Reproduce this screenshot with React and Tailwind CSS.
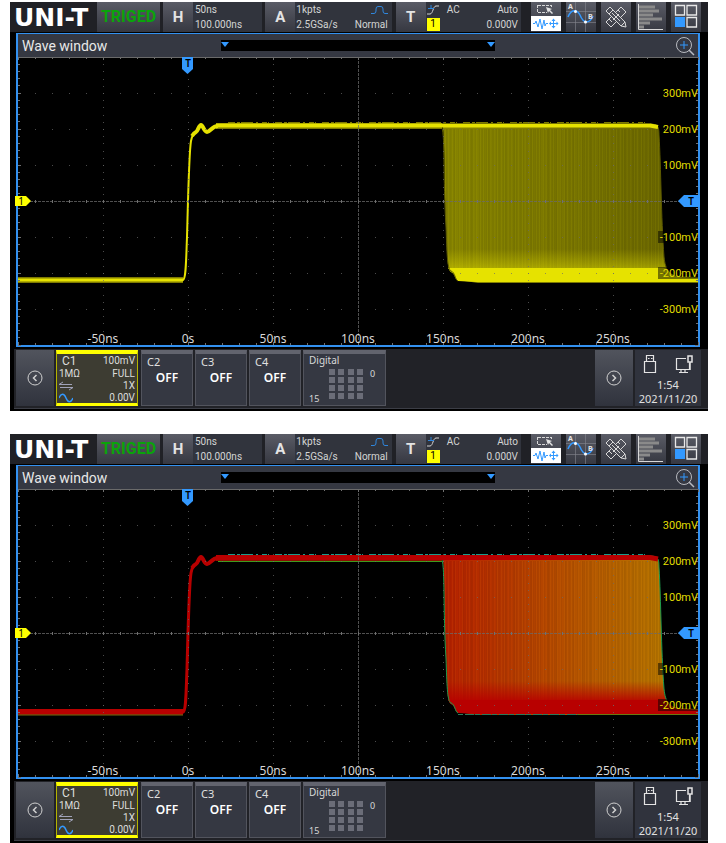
import React from 'react';

const DIV_X = 85;
const DIV_Y = 36;
const W = 680;
const H = 288;

const RISE =
  'M0 223 H165 C168 222 168 205 169 180 C170 145 171 95 173 84 C174 78 176 76 178 75 C180 74 181 68 183 68 C185 68 186 75 189 75 C192 75 194 69 200 69';
const RIPPLE =
  'M174 79 C176 76 176 76 178 75 C180 74 181 68 183 68 C185 68 186 75 189 75 C192 75 194 69 200 69';
const ZONE =
  'M424 67 C427 72 426 120 428 170 C429 195 429 214 433 215 C437 216 437 223 440 223 L460 226 H680 V220 L660 219 C650 217 647 212 646 200 C643 160 643 110 641 78 C641 70 640 67 635 67 Z';
const LEFT_EDGE = 'M424 71 C427 80 425 120 428 170 C429 195 429 212 433 214 C437 215 437 223 440 224';
const RIGHT_EDGE = 'M632 67 C640 67 641 70 641 78 C643 110 643 160 646 200 C647 208 648 210 649 211';
const BAND = 'M430 211 L433 215 C437 216 437 223 440 224 L458 225 H680 V221 L660 220 C652 218 650 212 646 211 Z';

const themes = {
  yellow: {
    id: 'yellow',
    core: '#e6e200',
    dim: '#7d7900',
    stops: ['#8a8700', '#7f7b00', '#6d6900'],
    streak: '#a8a400',
    edge: '#5c5900',
  },
  red: {
    id: 'red',
    core: '#b80000',
    dim: '#8a1000',
    stops: ['#b82000', '#b84800', '#b87a00'],
    streak: '#c88a10',
    edge: '#1d9a4c',
  },
};

function times(n) {
  return Array.from({ length: n }, (_, i) => i);
}

function Grid() {
  return (
    <g stroke="#6b6b6b" strokeWidth="1" shapeRendering="crispEdges">
      {times(7).map((i) => (
        <line
          key={'v' + i}
          x1={(i + 1) * DIV_X}
          x2={(i + 1) * DIV_X}
          y1="0"
          y2={H}
          strokeDasharray={i === 3 ? '3 1' : '1 6.2'}
          opacity={i === 3 ? 0.75 : 0.7}
        />
      ))}
      {times(7).map((i) => (
        <line
          key={'h' + i}
          x1="0"
          x2={W}
          y1={(i + 1) * DIV_Y}
          y2={(i + 1) * DIV_Y}
          strokeDasharray={i === 3 ? '3 1' : '1 16'}
          opacity={i === 3 ? 0.75 : 0.7}
        />
      ))}
      {times(41).map((i) => {
        const len = i % 5 === 0 ? 3 : 2;
        return (
          <g key={'t' + i} stroke="#707070">
            <path d={`M${i * 17} 0 v${len} M${i * 17} ${H} v-${len} M${i * 17} 143 v3`} />
            <path d={`M0 ${i * 7.2} h${len} M${W} ${i * 7.2} h-${len}`} />
          </g>
        );
      })}
      <line x1="0" x2={W} y1="0.5" y2="0.5" stroke="#6a6a6a" />
    </g>
  );
}

function Trace({ theme }) {
  const fill = 'fill-' + theme.id;
  const fade = 'fade-' + theme.id;
  const clip = 'clip-' + theme.id;
  const red = theme.id === 'red';
  return (
    <g fill="none">
      <defs>
        <linearGradient id={fill}>
          <stop offset="0" stopColor={theme.stops[0]} />
          <stop offset="0.4" stopColor={theme.stops[1]} />
          <stop offset="0.9" stopColor={theme.stops[2]} />
        </linearGradient>
        <linearGradient id={fade} x1="0" x2="0" y1="0" y2="1">
          <stop offset="0" stopColor={theme.core} stopOpacity="0" />
          <stop offset="1" stopColor={theme.core} stopOpacity={red ? 0.9 : 0.45} />
        </linearGradient>
        <clipPath id={clip}>
          <path d={ZONE} />
        </clipPath>
      </defs>
      <path d={ZONE} fill={`url(#${fill})`} />
      <g clipPath={`url(#${clip})`}>
        {times(222).map((i) => (
          <line
            key={i}
            x1={425.5 + i}
            x2={425.5 + i}
            y1="72"
            y2="212"
            stroke={(i * i) % 7 < 3 ? '#000000' : theme.streak}
            opacity={0.02 + ((i * i * 13 + i * 5) % 17) / 200}
          />
        ))}
        <rect x="424" y="192" width="230" height="20" fill={`url(#${fade})`} />
      </g>
      <path d={BAND} fill={theme.core} />
      <path d={LEFT_EDGE} stroke={theme.edge} />
      <path d={RIGHT_EDGE} stroke={theme.edge} />
      <path d="M0 223 H165" stroke={theme.dim} strokeWidth="6" />
      <path d="M198 69 H424" stroke={theme.dim} strokeWidth="6" />
      <path d={RISE} stroke={theme.core} strokeWidth={red ? 3 : 2} strokeLinejoin="round" />
      <path d={RIPPLE} stroke={theme.core} strokeWidth="4" />
      <path d="M198 68.5 H632 L640 70" stroke={theme.core} strokeWidth={red ? 5 : 4} />
      <path
        d="M210 65.5 H630"
        stroke={red ? '#1d9a8c' : '#7d7900'}
        strokeDasharray="7 2 3 1 12 3 2 4 5 1 1 6"
      />
      {red ? (
        <g>
          <path d="M0 222.500 H165" stroke={theme.core} strokeWidth="5" />
          <path d="M200 72.500 H424" stroke="#3f9a1c" />
          <path d="M0 226 H165" stroke="#7a6a10" />
          <path d="M440 225.500 H560" stroke="#2b7a5a" strokeDasharray="5 2 9 1" />
          <path d="M560 225.500 H680" stroke="#6a7a10" />
        </g>
      ) : (
        <path d="M0 223 H165" stroke={theme.core} strokeWidth="3" />
      )}
    </g>
  );
}

const volts = ['300mV', '200mV', '100mV', null, '-100mV', '-200mV', '-300mV'];
const nanos = ['-50ns', '0s', '50ns', '100ns', '150ns', '200ns', '250ns'];

function Plot({ theme }) {
  return (
    <svg viewBox={`0 0 ${W} ${H}`} className="block w-full overflow-visible bg-black" role="img" aria-label="Channel 1 waveform">
      <Trace theme={theme} />
      <Grid />
      {volts.map((v, i) =>
        v ? (
          <g key={v}>
            {i > 3 && <rect x="640" y={(i + 1) * DIV_Y - 6} width="40" height="12" fill="#000000" opacity="0.5" />}
            <text x="680" y={(i + 1) * DIV_Y + 4} textAnchor="end" fill="#e0dc00" className="font-['Roboto',sans-serif] text-[11px]">
              {v}
            </text>
          </g>
        ) : null
      )}
      {nanos.map((n, i) => (
        <text key={n} x={(i + 1) * DIV_X} y="286" textAnchor="middle" fill="#d8d8d8" className="text-[12px]">
          {n}
        </text>
      ))}
      <path d="M164 0 H175 V12 L169.500 17 L164 12 Z" fill="#3399ff" />
      <text x="170" y="10" textAnchor="middle" fill="#000000" className="text-[10px] font-semibold">T</text>
      <path d="M-3 139 H8 L13 144 L8 149 H-3 Z" fill="#ffff00" />
      <text x="3" y="148" textAnchor="middle" fill="#000000" className="text-[10px]">1</text>
      <path d="M682 138 H666 L660 144 L666 150 H682 Z" fill="#3399ff" />
      <text x="673" y="148" textAnchor="middle" fill="#000000" className="text-[10px] font-semibold">T</text>
    </svg>
  );
}

function KeyButton({ children }) {
  return (
    <button type="button" className="w-[30px] shrink-0 bg-linear-to-b from-[#5a5c66] to-[#363841] font-['Roboto',sans-serif] text-[15px] font-bold text-[#e4e4e4]">
      {children}
    </button>
  );
}

function ToolButton({ label, children }) {
  return (
    <button type="button" aria-label={label} className="size-[30px] shrink-0 bg-linear-to-b from-[#5a5c66] to-[#363841]">
      <svg viewBox="0 0 30 30" className="size-[30px]" fill="none">
        {children}
      </svg>
    </button>
  );
}

function Cells({ className, children }) {
  return (
    <div className={`grid min-w-0 grow grid-rows-2 items-center bg-[#31343d] font-['Roboto',sans-serif] text-[10px] leading-[14px] text-[#d4d4d4] ${className}`}>
      {children}
    </div>
  );
}

function TopBar() {
  return (
    <div className="flex h-[30px] bg-[#202126] pr-[7px] pl-1">
      <div className="flex w-[83px] shrink-0 items-center font-['DejaVu_Sans',sans-serif] text-[25px] leading-none font-bold text-white">
        UNI-T
      </div>
      <button type="button" className="mr-[3px] w-[63px] shrink-0 bg-linear-to-b from-[#5a5c66] to-[#363841] font-['Roboto',sans-serif] text-[16px] font-bold text-[#0aa30a]">
        TRIGED
      </button>
      <KeyButton>H</KeyButton>
      <Cells className="mr-[3px] basis-[69px] pl-[2px]">
        <div>50ns</div>
        <div>100.000ns</div>
      </Cells>
      <KeyButton>A</KeyButton>
      <Cells className="mr-[4px] basis-[96px] pr-1 pl-px">
        <div className="flex items-center justify-between">
          1kpts
          <svg viewBox="0 0 17 10" className="h-[10px] w-[17px]" fill="none" stroke="#2f86dd">
            <path d="M0 8.500 H3 Q5 8.500 5 6 V4 Q5 1.500 7 1.500 H10 Q12 1.500 12 4 V6 Q12 8.500 14 8.500 H17" />
          </svg>
        </div>
        <div className="flex justify-between">
          <span>2.5GSa/s</span>
          <span>Normal</span>
        </div>
      </Cells>
      <KeyButton>T</KeyButton>
      <Cells className="mr-[10px] basis-[95px] pr-[3px] pl-px">
        <div className="flex items-center">
          <svg viewBox="0 0 12 10" className="mr-2 h-[10px] w-[12px]" fill="none">
            <path d="M0 9 H3 C6 9 6 1 9 1 H12" stroke="#d4d4d4" />
            <path d="M1 3.500 H7 M4 0 V4" stroke="#2f86dd" />
          </svg>
          <span>AC</span>
          <span className="ml-auto">Auto</span>
        </div>
        <div className="flex justify-between">
          <span className="flex h-[13px] w-[13px] items-center justify-center bg-[#ffff00] text-black">1</span>
          <span>0.000V</span>
        </div>
      </Cells>
      <div className="flex shrink-0 gap-[5px]">
        <ToolButton label="Select region">
          <rect y="14" width="30" height="15" fill="#ffffff" />
          <path d="M7 3.500 H20 M7 10.500 H16 M6.500 3 V11 M20.500 3 V5" stroke="#d8d8d8" strokeDasharray="3 1" />
          <path d="M15 5 L21 7 L19 8 L22 11 L21 12 L18 9 L17 11 Z" fill="#e4e4e4" />
          <path d="M2 21.500 H4 L5 19 L7 25 L9 17 L11 27 L13 18 L14 24 L15 21.500 H17 M19 21.500 H27 M22.500 18 V25" stroke="#3399ff" />
          <path d="M18 21.500 L20 19.500 V23.500 Z M27.500 21.500 L25.500 19.500 V23.500 Z M22.500 16.500 L20.500 19 H24.500 Z M22.500 26.500 L20.500 24 H24.500 Z" fill="#3399ff" />
        </ToolButton>
        <ToolButton label="Cursors">
          <path d="M9.500 0 V30 M19.500 0 V30 M0 9.500 H30 M0 20.500 H30" stroke="#85878f" opacity="0.6" />
          <path d="M2 15 C5 7 11 7 14 13 C18 23 24 21 27 14" stroke="#3399ff" strokeWidth="1.500" />
          <circle cx="9.500" cy="9.500" r="1.500" fill="#ffffff" />
          <circle cx="19.500" cy="20" r="1.500" fill="#ffffff" />
          <text x="2" y="7" fill="#e4e4e4" className="text-[7px] font-bold">A</text>
          <text x="22" y="17" fill="#e4e4e4" className="text-[7px] font-bold">B</text>
        </ToolButton>
        <ToolButton label="Measure">
          <g stroke="#d8d8d8">
            <path d="M20 5 L25 10 L10 25 L5 20 Z" />
            <path d="M17 8 L19 10 M14 11 L17 14 M11 14 L13 16 M8 17 L11 20" />
            <path d="M5 9 L9 5 L24 20 L25 25 L20 24 Z" fill="#4a4c55" />
            <path d="M8 12 L12 8 M20 24 L24 20 M11 11 L19 19 M12 18 L18 12" />
          </g>
        </ToolButton>
        <ToolButton label="Histogram">
          <path d="M2.500 2 V27.500 H27" stroke="#d8d8d8" />
          <path d="M3 5 H19 M3 9 H23 M3 13 H17 M3 17 H26 M3 21 H14 M3 25 H8" stroke="#8a8a8a" strokeWidth="3" />
        </ToolButton>
        <ToolButton label="Layout">
          <path d="M4.500 3.500 H13.500 V13 H4.500 Z M16 3.500 H25.500 V13 H16 Z M16 15.500 H25.500 V25 H16 Z" stroke="#e8e8e8" strokeWidth="1.300" />
          <rect x="4" y="15" width="10" height="10" fill="#3399ff" />
        </ToolButton>
      </div>
    </div>
  );
}

function Channel({ name }) {
  return (
    <button type="button" className="flex w-[52px] shrink-0 flex-col border border-t-4 border-[#52545d] border-t-[#62646e] bg-[#353842] pl-[5px] text-left text-[#e0e0e0]">
      <span className="text-[11px] leading-[16px]">{name}</span>
      <span className="w-full pr-[5px] text-center text-[12px] leading-[16px] font-semibold text-white">OFF</span>
    </button>
  );
}

function ArrowButton({ label, d, className }) {
  return (
    <button type="button" aria-label={label} className={`flex w-[38px] shrink-0 items-center justify-center bg-linear-to-b from-[#51545d] to-[#30333d] ${className}`}>
      <svg viewBox="0 0 16 16" className="size-[16px]" fill="none" stroke="#d0d0d0">
        <circle cx="8" cy="8" r="7" />
        <path d={d} strokeWidth="1.500" />
      </svg>
    </button>
  );
}

function BottomBar() {
  return (
    <div className="mt-[2px] ml-1 border-b border-[#3c3e46] bg-[#212227] pb-[2px]">
      <div className="flex h-[57px] gap-[2px] pt-px pr-[7px] pl-[2px]">
        <ArrowButton label="Previous" d="M9.500 5 L6.500 8 L9.500 11" className="" />
        <button type="button" className="grid w-[82px] shrink-0 grid-cols-[auto_auto] content-start items-center justify-between border-x border-t-4 border-b-3 border-x-[#b4b400] border-y-[#ffff00] bg-[#3d3c32] px-[2px] font-['Roboto',sans-serif] text-[10px] leading-[12px] text-[#dcdcdc]">
          <span className="pl-[3px] text-left text-[12px] leading-[14px]">C1</span>
          <span className="text-right text-[10px] leading-[14px]">100mV</span>
          <span className="text-left">1MΩ</span>
          <span className="text-right">FULL</span>
          <svg viewBox="0 0 14 10" className="h-[10px] w-[14px]" fill="none" stroke="#a0a2b8">
            <path d="M0 3.500 H13 M4 1 L0 3.500 M1 6.500 H14 M10 9 L14 6.500" />
          </svg>
          <span className="text-right">1X</span>
          <svg viewBox="0 0 14 10" className="h-[10px] w-[14px]" fill="none" stroke="#3399ff">
            <path d="M0 5 C2 0 5 0 7 5 C9 10 12 10 14 5" strokeWidth="1.500" />
          </svg>
          <span className="text-right">0.00V</span>
        </button>
        <div className="ml-px flex gap-[2px]">
          <Channel name="C2" />
          <Channel name="C3" />
          <Channel name="C4" />
          <button type="button" className="grid w-[83px] grid-cols-[20px_1fr_16px] grid-rows-[13px_1fr] border border-t-4 border-[#52545d] border-t-[#62646e] bg-[#353842] px-[5px] text-left text-[9px] leading-[13px] text-[#d8d8d8]">
            <span className="col-span-3 text-[10px] leading-[12px]">Digital</span>
            <span className="self-end">15</span>
            <span className="grid grid-cols-4 content-start gap-[2px] self-start pt-[2px]">
              {times(16).map((i) => (
                <span key={i} className="size-[6px] bg-[#6b6d78]" />
              ))}
            </span>
            <span className="pl-[6px]">0</span>
          </button>
        </div>
        <ArrowButton label="Next" d="M6.500 5 L9.500 8 L6.500 11" className="ml-auto" />
        <div className="flex w-[66px] shrink-0 flex-col items-center bg-[#30333d] text-[11px] leading-[14px] text-[#e0e0e0]">
          <div className="flex h-[29px] w-full items-center justify-between px-2">
            <svg viewBox="0 0 14 20" className="h-[20px] w-[14px]" fill="none" stroke="#e4e4e4">
              <path d="M3.500 7 V1.500 H10.500 V7 M1.500 7.500 H12.500 V18.500 H1.500 Z M5 4.500 H6.500 M8 4.500 H9.500" strokeWidth="1.200" />
            </svg>
            <svg viewBox="0 0 18 20" className="h-[20px] w-[18px]" fill="none" stroke="#e4e4e4">
              <path d="M11 4.500 H1.500 V15.500 H14.500 V9 M4 18.500 H13 M6 16 V18 M10 16 V18" strokeWidth="1.200" />
              <path d="M13 2 H17 V8 H13 Z M15 8 V16" strokeWidth="1.500" />
            </svg>
          </div>
          <div>1:54</div>
          <div>2021/11/20</div>
        </div>
      </div>
    </div>
  );
}

function Scope({ theme }) {
  return (
    <section className="bg-black pb-[2px]">
      <TopBar />
      <div className="mt-px mr-2 ml-[6px] border-x-2 border-t border-b-2 border-[#3391f0]">
        <div className="flex h-[23px] items-center bg-[#353842]">
          <h2 className="w-[203px] shrink-0 pl-[4px] font-['Roboto',sans-serif] text-[14px] leading-[20px] text-[#e8e8e8]">Wave window</h2>
          <div className="flex h-[11px] grow basis-[274px] justify-between bg-black">
            <span className="mt-[2px] h-0 border-x-[4px] border-t-[5px] border-x-transparent border-t-[#3399ff]" />
            <span className="mt-[2px] h-0 border-x-[4px] border-t-[5px] border-x-transparent border-t-[#3399ff]" />
          </div>
          <div className="flex grow basis-[203px] justify-end pr-[3px]">
            <button type="button" aria-label="Zoom">
              <svg viewBox="0 0 20 20" className="block size-[20px]" fill="none">
                <circle cx="9" cy="9" r="7.500" stroke="#b8bac0" />
                <path d="M14 14 L19 19" stroke="#b8bac0" strokeWidth="1.500" />
                <path d="M9 5 V13 M5 9 H13" stroke="#3399ff" />
              </svg>
            </button>
          </div>
        </div>
        <Plot theme={theme} />
      </div>
      <BottomBar />
    </section>
  );
}

export default function App() {
  return (
    <main className="flex flex-col gap-[23px] bg-white pt-[2px] pr-[18px] pl-[10px] font-['Noto_Sans',sans-serif]">
      <Scope theme={themes.yellow} />
      <Scope theme={themes.red} />
    </main>
  );
}
